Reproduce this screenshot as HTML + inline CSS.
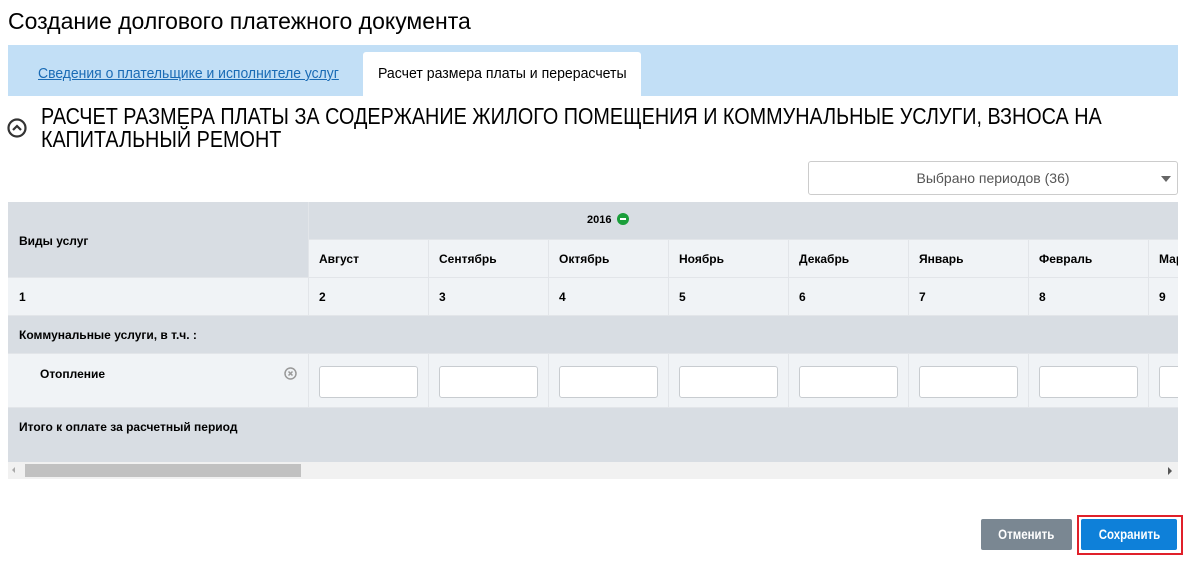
<!DOCTYPE html>
<html><head><meta charset="utf-8"><style>
*{margin:0;padding:0;box-sizing:border-box}
body{width:1192px;height:562px;background:#fff;position:relative;overflow:hidden;font-family:"Liberation Sans",sans-serif;color:#000}
.n{white-space:nowrap;transform-origin:0 0}
.abs{position:absolute}
.inp{position:absolute;width:99px;height:32px;background:#fff;border:1px solid #c8ccd0;border-radius:3px}
</style></head><body>
<div class="abs n" style="left:8px;top:8px;font-size:23px;">Создание долгового платежного документа</div>
<div class="abs" style="left:8px;top:45px;width:1170px;height:51px;background:#c2dff6"></div>
<div class="abs n" style="left:38px;top:65px;font-size:15px;color:#1a6bb5;text-decoration:underline;transform:scaleX(0.93)">Сведения о плательщике и исполнителе услуг</div>
<div class="abs" style="left:363px;top:52px;width:278px;height:44px;background:#fff;border-radius:3px 3px 0 0"></div>
<div class="abs n" style="left:378px;top:65px;font-size:15px;transform:scaleX(0.94)">Расчет размера платы и перерасчеты</div>
<svg class="abs" style="left:7px;top:118px" width="20" height="20" viewBox="0 0 20 20"><circle cx="10" cy="10" r="8.5" fill="none" stroke="#333" stroke-width="2.2"/><path d="M6 12 L10 8 L14 12" fill="none" stroke="#333" stroke-width="2.2"/></svg>
<div class="abs n" style="left:41px;top:105px;font-size:23px;line-height:23px;transform:scaleX(0.861)">РАСЧЕТ РАЗМЕРА ПЛАТЫ ЗА СОДЕРЖАНИЕ ЖИЛОГО ПОМЕЩЕНИЯ И КОММУНАЛЬНЫЕ УСЛУГИ, ВЗНОСА НА<br>КАПИТАЛЬНЫЙ РЕМОНТ</div>
<div class="abs" style="left:808px;top:161px;width:370px;height:34px;border:1px solid #ccc;border-radius:3px;text-align:center;font-size:14px;line-height:32px;color:#555">Выбрано периодов (36)</div>
<div class="abs" style="left:1161px;top:176px;width:0;height:0;border-left:5px solid transparent;border-right:5px solid transparent;border-top:6px solid #666"></div>

<div class="abs" style="left:8px;top:202px;width:1170px;height:260px;background:#d8dde3;overflow:hidden">
 <div class="abs" style="left:300px;top:38px;width:880px;height:76px;background:#f0f3f6"></div>
 <div class="abs" style="left:0;top:76px;width:300px;height:38px;background:#f0f3f6"></div>
 <div class="abs" style="left:0;top:152px;width:1180px;height:54px;background:#f0f3f6"></div>
 <div class="abs" style="left:0;top:75px;width:1180px;height:1px;background:#e2e5e9"></div>
 <div class="abs" style="left:0;top:113px;width:1180px;height:1px;background:#e2e5e9"></div>
 <div class="abs" style="left:0;top:151px;width:1180px;height:1px;background:#e2e5e9"></div>
 <div class="abs" style="left:0;top:205px;width:1180px;height:1px;background:#e2e5e9"></div>
 <div class="abs" style="left:300px;top:0;width:1px;height:114px;background:#e2e5e9"></div>
 <div class="abs" style="left:300px;top:152px;width:1px;height:54px;background:#e2e5e9"></div>
 <div class="abs" style="left:300px;top:37px;width:880px;height:1px;background:#e2e5e9"></div>
 <div class="abs" style="font-size:12px;font-weight:bold;left:11px;top:32px">Виды услуг</div>
 <div class="abs" style="font-size:11px;font-weight:bold;left:579px;top:12px">2016</div>
 <svg class="abs" style="left:609px;top:11px" width="12" height="12"><circle cx="6" cy="6" r="6" fill="#1a9e3a"/><rect x="3" y="5" width="6" height="2" fill="#fff"/></svg>
 <div class="abs" style="font-size:12px;font-weight:bold;left:11px;top:88px">1</div>
 <div class="abs" style="font-size:12px;font-weight:bold;left:11px;top:126px">Коммунальные услуги, в т.ч. :</div>
 <div class="abs" style="font-size:12px;font-weight:bold;left:32px;top:165px">Отопление</div>
 <svg class="abs" style="left:276px;top:165px" width="13" height="13" viewBox="0 0 13 13"><circle cx="6.5" cy="6.5" r="5.5" fill="none" stroke="#999" stroke-width="1.5"/><path d="M4.5 4.5L8.5 8.5M8.5 4.5L4.5 8.5" stroke="#999" stroke-width="1.5"/></svg>
 <div class="abs" style="font-size:12px;font-weight:bold;left:11px;top:218px">Итого к оплате за расчетный период</div>
 <div id="cols"></div>
</div>
<div class="abs" style="left:8px;top:462px;width:1170px;height:17px;background:#f1f1f1"></div>
<div class="abs" style="left:25px;top:464px;width:276px;height:13px;background:#c1c1c1"></div>
<div class="abs" style="left:12px;top:467px;border-top:3px solid transparent;border-bottom:3px solid transparent;border-right:3px solid #aaa"></div>
<div class="abs" style="left:1168px;top:467px;border-top:4px solid transparent;border-bottom:4px solid transparent;border-left:4px solid #555"></div>

<div class="abs" style="left:981px;top:519px;width:91px;height:31px;background:#7a8792;border-radius:2px;color:#fff;font-size:14px;font-weight:bold;line-height:31px;text-align:center"><span style="display:inline-block;transform:scaleX(0.82)">Отменить</span></div>
<div class="abs" style="left:1077px;top:515px;width:106px;height:40px;border:2px solid #e0202a"></div>
<div class="abs" style="left:1081px;top:519px;width:96px;height:31px;background:#0e80d9;border-radius:2px;color:#fff;font-size:14px;font-weight:bold;line-height:31px;text-align:center"><span style="display:inline-block;transform:scaleX(0.82)">Сохранить</span></div>
<script>
var m=["Август","Сентябрь","Октябрь","Ноябрь","Декабрь","Январь","Февраль","Март"],h="";
for(var i=0;i<8;i++){var x=300+i*120;
h+='<div class="abs" style="left:'+(x+120)+'px;top:38px;width:1px;height:76px;background:#e2e5e9"></div>';
h+='<div class="abs" style="left:'+(x+120)+'px;top:152px;width:1px;height:54px;background:#e2e5e9"></div>';
h+='<div class="abs" style="font-size:12px;font-weight:bold;left:'+(x+11)+'px;top:50px">'+m[i]+'</div>';
h+='<div class="abs" style="font-size:12px;font-weight:bold;left:'+(x+11)+'px;top:88px">'+(i+2)+'</div>';
h+='<div class="inp" style="left:'+(x+11)+'px;top:164px"></div>';}
document.getElementById("cols").innerHTML=h;
</script>
</body></html>
